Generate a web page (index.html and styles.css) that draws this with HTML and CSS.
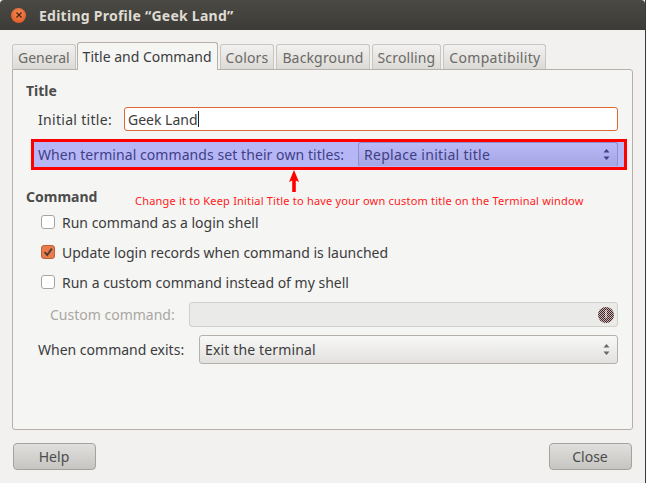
FILE: index.html
```html
<!DOCTYPE html>
<html>
<head>
    <title>Editing Profile</title>
    <link rel="stylesheet" href="styles.css">
</head>
<body>
    <div class="window">
        <div class="titlebar">
            <div class="close-btn">
                <svg width="10" height="10" viewBox="0 0 10 10"><path d="M2.500 2.500l5 5M7.500 2.500l-5 5" stroke="#4a2412" stroke-width="1.300" fill="none"/></svg>
            </div>
            <div class="window-title">Editing Profile “Geek Land”</div>
        </div>

        <div class="content">
            <div class="tabs">
                <div class="tab">General</div>
                <div class="tab active">Title and Command</div>
                <div class="tab">Colors</div>
                <div class="tab">Background</div>
                <div class="tab">Scrolling</div>
                <div class="tab">Compatibility</div>
            </div>

            <div class="panel">
                <div class="section-title">Title</div>
                <div class="row title-row">
                    <label class="field-label">Initial title:</label>
                    <div class="text-input"><span>Geek Land</span><i class="caret"></i></div>
                </div>

                <div class="highlight">
                    <label class="field-label">When terminal commands set their own titles:</label>
                    <div class="combo combo-selected">
                        <span>Replace initial title</span>
                        <svg class="updown" width="7" height="13" viewBox="0 0 7 13"><path d="M3.500 1l3 3.500H.5zM3.500 12l3-3.500H.5z" fill="currentColor"/></svg>
                    </div>
                </div>

                <div class="section-title command-title">Command</div>
                <div class="check-row">
                    <span class="checkbox"></span>Run command as a login shell
                </div>
                <div class="check-row">
                    <span class="checkbox checked">
                        <svg width="14" height="14" viewBox="0 0 14 14"><path d="M3 7l3 3.500L11.500 3" stroke="#4b3b33" stroke-width="2.200" fill="none"/></svg>
                    </span>Update login records when command is launched
                </div>
                <div class="check-row">
                    <span class="checkbox"></span>Run a custom command instead of my shell
                </div>

                <div class="row custom-row">
                    <label class="field-label disabled">Custom command:</label>
                    <div class="custom-input"><i class="warn-icon"></i></div>
                </div>
                <div class="row exit-row">
                    <label class="field-label">When command exits:</label>
                    <div class="combo">
                        <span>Exit the terminal</span>
                        <svg class="updown" width="7" height="13" viewBox="0 0 7 13"><path d="M3.500 1l3 3.500H.5zM3.500 12l3-3.500H.5z" fill="currentColor"/></svg>
                    </div>
                </div>
            </div>

            <div class="buttons">
                <div class="button">Help</div>
                <div class="button">Close</div>
            </div>
        </div>

        <!-- red note drawn on top of the screenshot -->
        <svg class="note-arrow" width="14" height="22" viewBox="0 0 14 22"><path d="M7 0l5 12-3.200-1.500V22H5.200V10.500L2 12z" fill="#ff0000"/></svg>
        <div class="note-text">Change it to Keep Initial Title to have your own custom title on the Terminal window</div>
    </div>
</body>
</html>
```

FILE: styles.css
```css
html, body {
    margin: 0;
    height: 100%;
    background: #fff;
}

body {
    font-family: "Noto Sans", "Open Sans", sans-serif;
    font-size: 14px;
    color: #3c3c3c;
}

.window {
    position: relative;
    width: 646px;
    height: 483px;
    box-sizing: border-box;
    display: flex;
    flex-direction: column;
    background: #f2f1f0;
    border-right: 1px solid #3a3a38;
}

.titlebar {
    height: 30px;
    flex: none;
    display: flex;
    align-items: center;
    padding-left: 11px;
    background: linear-gradient(#4a4944, #3c3b37);
    border-radius: 4px 4px 0 0;
}

.close-btn {
    width: 15px;
    height: 15px;
    border-radius: 50%;
    display: flex;
    align-items: center;
    justify-content: center;
    background: radial-gradient(circle at 50% 35%, #f58a55, #dd4f1c);
}

.window-title {
    margin-left: 13px;
    font-size: 14px;
    font-weight: 700;
    letter-spacing: 0.25px;
    color: #dfdbd2;
}

.content {
    flex: 1;
    display: flex;
    flex-direction: column;
    padding: 12px 12px 0 12px;
}

.tabs {
    height: 27px;
    flex: none;
    display: flex;
    align-items: flex-end;
    gap: 2px;
    position: relative;
    z-index: 1;
}

.tab {
    height: 25px;
    box-sizing: border-box;
    padding: 0 5px;
    display: flex;
    align-items: center;
    justify-content: center;
    color: #6a6a66;
    letter-spacing: 0.15px;
    border: 1px solid #c9c6c2;
    border-bottom: none;
    border-radius: 3px 3px 0 0;
    background: linear-gradient(#f2f1f0, #dcdad6);
}

.tab:first-child {
    letter-spacing: 0;
    margin-right: -1px;
}

.tab:last-child {
    letter-spacing: 0.3px;
}

.tab.active {
    height: 28px;
    color: #3c3c3c;
    letter-spacing: 0;
    border-color: #b5b0aa;
    background: #f5f5f4;
    margin-bottom: -1px;
}

.panel {
    width: 621px;
    height: 361px;
    flex: none;
    box-sizing: border-box;
    padding: 12px 14px 0 13px;
    background: #f5f5f4;
    border: 1px solid #b5b0aa;
    border-radius: 0 3px 3px 3px;
}

.section-title {
    font-weight: 700;
    line-height: 18px;
    color: #4c4c4c;
}

.row {
    display: flex;
    align-items: center;
}

.title-row {
    margin-top: 7px;
    padding-left: 12px;
}

.title-row .field-label {
    width: 86px;
    letter-spacing: 0.3px;
}

.text-input {
    width: 494px;
    height: 24px;
    box-sizing: border-box;
    display: flex;
    align-items: center;
    padding-left: 3px;
    background: #fff;
    border: 1px solid #e0663a;
    border-radius: 3px;
}

.caret {
    width: 1px;
    height: 16px;
    background: #222;
}

.highlight {
    width: 596px;
    height: 31px;
    box-sizing: border-box;
    margin: 8px 0 0 5px;
    padding: 0 6px 0 4px;
    display: flex;
    align-items: center;
    justify-content: space-between;
    background: #b6b6f6;
    color: #3f3f85;
    border: 3px solid #ff0000;
}

.highlight .field-label {
    letter-spacing: 0.07px;
}

.combo {
    height: 29px;
    box-sizing: border-box;
    display: flex;
    align-items: center;
    justify-content: space-between;
    padding: 0 7px 0 5px;
    letter-spacing: 0.15px;
    border: 1px solid #b5b0aa;
    border-radius: 3px;
    background: linear-gradient(#f8f8f7, #e2e1df);
}

.combo-selected {
    width: 260px;
    height: 25px;
    letter-spacing: 0.3px;
    border-color: #8f8fd0;
    border-bottom-color: transparent;
    color: #3f3f85;
    background: linear-gradient(#b9b9f8, #a5a5e4);
}

.updown {
    color: #666;
}

.combo-selected .updown {
    color: #3f3f85;
}

.command-title {
    margin-top: 18px;
}

.check-row {
    display: flex;
    align-items: center;
    height: 20px;
    margin-top: 10px;
    padding-left: 15px;
}

.command-title + .check-row {
    margin-top: 6px;
}

.checkbox {
    width: 14px;
    height: 14px;
    box-sizing: border-box;
    margin-right: 7px;
    flex: none;
    background: #fff;
    border: 1px solid #a8a49f;
    border-radius: 3px;
}

.checkbox.checked {
    display: flex;
    align-items: center;
    justify-content: center;
    background: #ea7b4b;
    border-color: #b9623c;
}

.custom-row {
    margin-top: 10px;
    padding-left: 24px;
}

.field-label.disabled {
    width: 139px;
    color: #a9a7a2;
}

.custom-input {
    width: 429px;
    height: 25px;
    box-sizing: border-box;
    display: flex;
    align-items: center;
    justify-content: flex-end;
    padding-right: 3px;
    background: #eaeae8;
    border: 1px solid #d2d0cc;
    border-radius: 3px;
}

.warn-icon {
    position: relative;
    width: 16px;
    height: 16px;
    border-radius: 50%;
    background: repeating-conic-gradient(#3a2626 0 25%, #cdb4b2 0 50%) 0 0 / 2px 2px;
}

.warn-icon::after {
    content: "";
    position: absolute;
    left: 7px;
    top: 3px;
    width: 2px;
    height: 8px;
    background: rgba(255, 255, 255, 0.45);
}

.exit-row {
    margin-top: 8px;
    padding-left: 12px;
}

.exit-row .field-label {
    width: 161px;
}

.exit-row .combo {
    width: 419px;
}

.buttons {
    display: flex;
    justify-content: space-between;
    width: 619px;
    margin: 13px 0 0 1px;
}

.button {
    width: 83px;
    height: 27px;
    box-sizing: border-box;
    padding-right: 1px;
    display: flex;
    align-items: center;
    justify-content: center;
    border: 1px solid #a5a29d;
    border-radius: 4px;
    background: linear-gradient(#e0dfdd, #c6c5c2);
    color: #4c4c4c;
}

.note-arrow {
    position: absolute;
    left: 287px;
    top: 170px;
}

.note-text {
    position: absolute;
    left: 135px;
    top: 193px;
    font-size: 11px;
    line-height: 15px;
    letter-spacing: 0.2px;
    color: #ff1a1a;
    white-space: nowrap;
}
```
